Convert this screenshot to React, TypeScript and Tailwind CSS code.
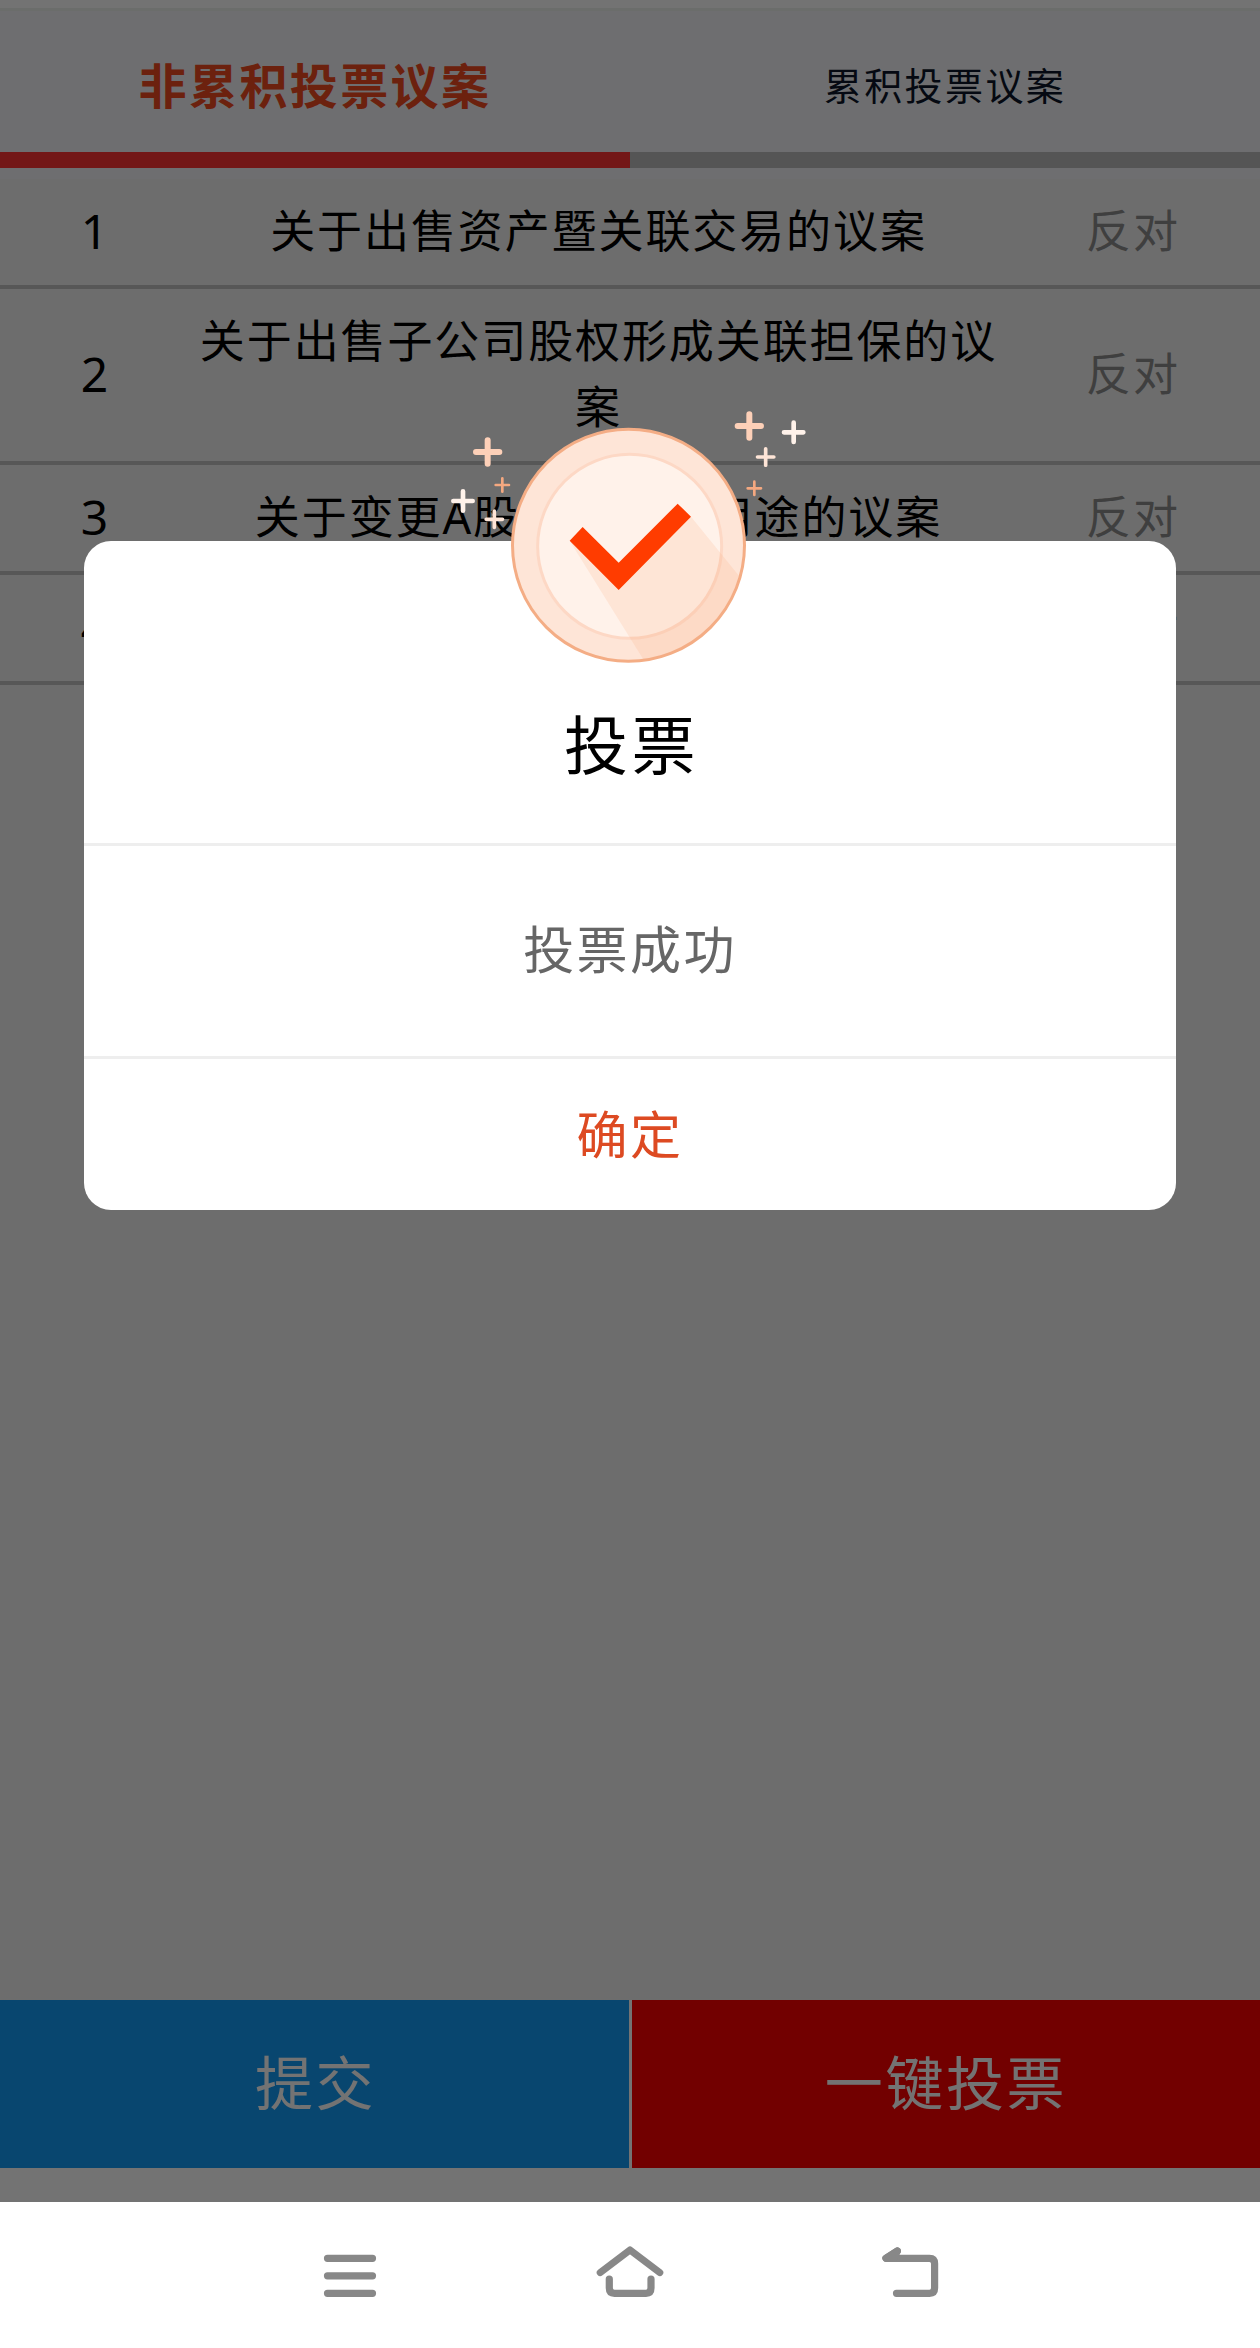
import React from "react";

interface Proposal {
  no: number;
  title: string;
  vote: string;
}

const PROPOSALS: Proposal[] = [
  { no: 1, title: "关于出售资产暨关联交易的议案", vote: "反对" },
  { no: 2, title: "关于出售子公司股权形成关联担保的议案", vote: "反对" },
  { no: 3, title: "关于变更A股募集资金用途的议案", vote: "反对" },
  { no: 4, title: "", vote: "反对" },
];

// center x, center y, half length, stroke width, color
const SPARKLES: [number, number, number, number, string][] = [
  [173, 186, 44, 18, "#fdd0b8"],
  [217, 285, 24, 8, "#f4a880"],
  [99, 333, 36, 14, "#fff2ea"],
  [193, 388, 30, 11, "#fee5d7"],
  [958, 108, 44, 18, "#fdd0b8"],
  [1091, 127, 36, 14, "#fff2ea"],
  [1007, 201, 30, 11, "#fee5d7"],
  [973, 295, 24, 8, "#f4a880"],
];

function SuccessBadge() {
  return (
    <svg viewBox="0 0 1200 870" className="absolute -top-[151px] left-[346px] h-[290px] w-[400px]">
      <defs>
        <clipPath id="coin">
          <circle cx="595.5" cy="466" r="345" />
        </clipPath>
      </defs>
      <circle cx="595.5" cy="466" r="348" fill="#fee5d7" />
      <circle cx="599" cy="469" r="276" fill="#fff2ea" stroke="#fdd8c5" strokeWidth="9" />
      <path
        d="M419 452L566 560L783 380L1000 648L900 870H677L637 803Z"
        fill="#f9a070"
        fillOpacity="0.16"
        clipPath="url(#coin)"
      />
      <circle cx="595.5" cy="466" r="348" fill="none" stroke="#f4ad85" strokeWidth="9" />
      <path d="M419 452L458 411L566 518L743 341L783 380L566 600Z" fill="#ff3c00" />
      {SPARKLES.map(([x, y, r, w, color]) => (
        <path
          key={`${x}-${y}`}
          d={`M${x - r + w / 2} ${y}H${x + r - w / 2}M${x} ${y - r + w / 2}V${y + r - w / 2}`}
          stroke={color}
          strokeWidth={w}
          strokeLinecap="round"
        />
      ))}
    </svg>
  );
}

function Tabs() {
  return (
    <div className="border-t-[3px] border-[#eef1ee] bg-[#f4f4f8] pb-[11px]">
      <div className="flex h-[141px]">
        <div className="flex flex-1 items-center justify-center pt-[3px] text-[48px] font-bold tracking-[2.4px] text-[#f04a20]">
          非累积投票议案
        </div>
        <div className="flex flex-1 items-center justify-center pt-[3px] text-[38px] tracking-[2.4px] text-[#0d1628]">
          累积投票议案
        </div>
      </div>
      <div className="flex h-4">
        <div className="flex-1 bg-[#ff3333]" />
        <div className="flex-1 bg-[#bdbdbd]" />
      </div>
    </div>
  );
}

function ProposalRow({ no, title, vote }: Proposal) {
  return (
    <li className="flex items-center border-b-4 border-[#c2c2c2] pt-[19px] pb-[21px] text-center font-['Noto_Sans','Noto_Sans_CJK_SC',sans-serif] leading-[66px]">
      <span className="w-[189px] text-[48px]">{no}</span>
      <span className="w-[819px] px-2 text-[45px] tracking-[1.9px]">{title}</span>
      <span className="w-[252px] pr-[2px] text-[45px] tracking-[1.9px] text-[#8c8c8c]">{vote}</span>
    </li>
  );
}

function Dialog() {
  return (
    <div className="absolute top-[541px] left-[84px] flex h-[669px] w-[1092px] flex-col rounded-[27px] bg-white text-center">
      <div className="flex h-[305px] items-end justify-center border-b-[3px] border-[#eeeeee] pb-[56px]">
        <h2 className="pl-[3px] text-[64px] leading-[92px] tracking-[3.4px] text-black">投票</h2>
      </div>
      <div className="flex h-[213px] items-center justify-center border-b-[3px] border-[#eeeeee] pb-2 text-[51px] tracking-[2.4px] text-[#666666]">
        投票成功
      </div>
      <button type="button" className="flex flex-1 items-center justify-center pb-1 text-[51px] tracking-[2.4px] text-[#dd4a22]">
        确定
      </button>
      <SuccessBadge />
    </div>
  );
}

function NavBar() {
  return (
    <nav className="h-[146px] bg-white">
      <svg viewBox="0 2202 1260 146" className="h-[146px] w-[1260px]" fill="none" stroke="#888888" strokeWidth="7.2" strokeLinecap="round" strokeLinejoin="round">
        <path d="M327.5 2258.3H372.5M327.5 2275.8H372.5M327.5 2293.3H372.5" />
        <path d="M600.3 2272.5L630 2250L659.7 2272.5" />
        <path d="M609.3 2279V2288Q609.3 2293.3 614.5 2293.3H646Q651 2293.3 651 2288V2279" />
        <path d="M897.3 2251L886 2258.3H929.5Q934.6 2258.3 934.6 2263.5V2288Q934.6 2293.3 929.5 2293.3H896.5" />
        <path d="M897.3 2251L886 2258.3H894Z" fill="#888888" />
      </svg>
    </nav>
  );
}

export default function App() {
  return (
    <div className="w-[1260px] font-['Noto_Sans_CJK_SC',sans-serif] text-black">
      <div className="relative flex h-[2202px] flex-col bg-[#f2f2f2]">
        <div className="h-2 bg-white" />
        <Tabs />
        <ul>
          {PROPOSALS.map((p) => (
            <ProposalRow key={p.no} {...p} />
          ))}
        </ul>
        <div className="mt-auto flex h-[202px] gap-[3px] bg-white pb-[34px] text-[58px] tracking-[2.6px] text-white">
          <button type="button" className="w-[629px] bg-[#129cf6] pb-2 pl-[2px]">
            提交
          </button>
          <button type="button" className="flex-1 bg-[#fc0000] pb-2">
            一键投票
          </button>
        </div>
        <div className="absolute inset-0 bg-black/55" />
        <Dialog />
      </div>
      <NavBar />
    </div>
  );
}
